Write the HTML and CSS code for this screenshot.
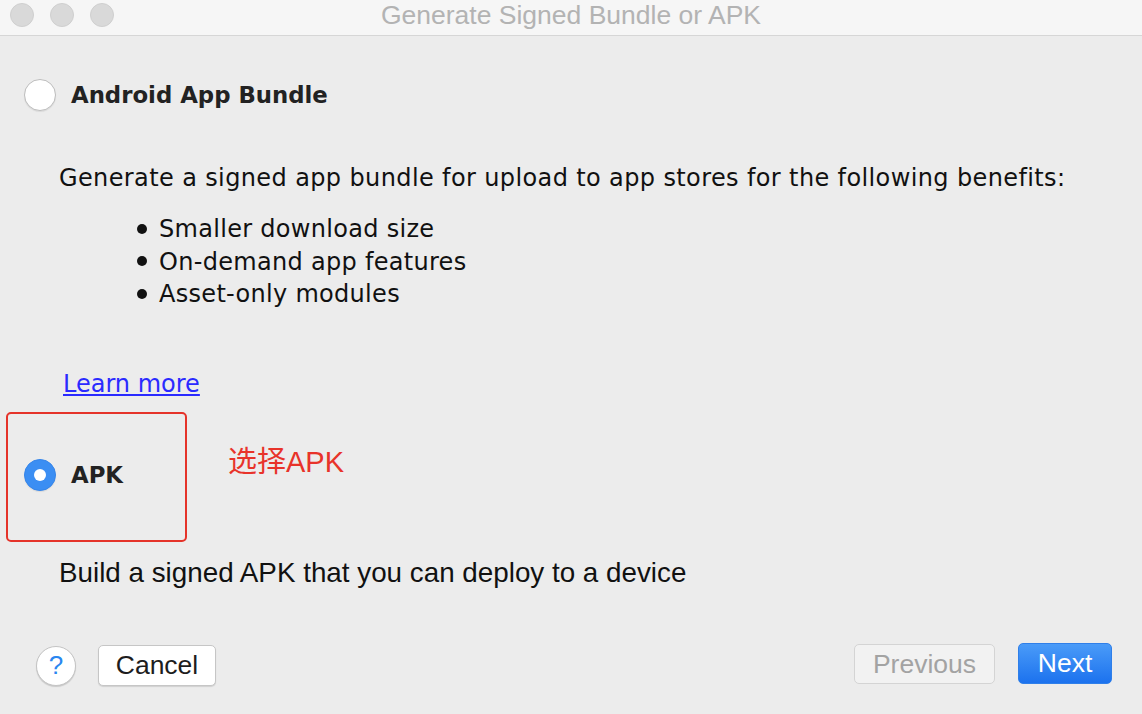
FILE: index.html
```html
<!DOCTYPE html>
<html>
<head>
<meta charset="utf-8">
<link rel="stylesheet" href="styles.css">
</head>
<body>
<div class="window">
  <div class="titlebar">
    <div class="lights"><span class="light"></span><span class="light"></span><span class="light"></span></div>
    <div class="title">Generate Signed Bundle or APK</div>
  </div>
  <div class="content">
    <div class="option opt-bundle">
      <span class="radio"></span>
      <span class="opt-label">Android App Bundle</span>
    </div>
    <p class="desc">Generate a signed app bundle for upload to app stores for the following benefits:</p>
    <ul class="benefits">
      <li>Smaller download size</li>
      <li>On-demand app features</li>
      <li>Asset-only modules</li>
    </ul>
    <a class="learn" href="#">Learn more</a>
    <div class="apk-row">
      <div class="highlight">
        <div class="option">
          <span class="radio checked"><span class="dot"></span></span>
          <span class="opt-label">APK</span>
        </div>
      </div>
      <div class="note">选择APK</div>
    </div>
    <p class="desc2">Build a signed APK that you can deploy to a device</p>
  </div>
  <div class="footer">
    <div class="left">
      <button class="help">?</button>
      <button class="btn cancel">Cancel</button>
    </div>
    <div class="right">
      <button class="btn prev">Previous</button>
      <button class="btn next">Next</button>
    </div>
  </div>
</div>
</body>
</html>
```
FILE: styles.css
```css
* { box-sizing: border-box; }
html, body { margin: 0; padding: 0; }
body {
  width: 1142px;
  height: 714px;
  overflow: hidden;
  background: #ececec;
  font-family: "Liberation Sans", Arial, sans-serif;
  color: #1a1a1a;
}
.window { display: flex; flex-direction: column; height: 714px; }
.titlebar {
  height: 36px;
  background: #f6f6f6;
  border-bottom: 1px solid #d6d6d6;
  position: relative;
  display: flex;
  align-items: center;
  justify-content: center;
}
.lights {
  position: absolute;
  left: 10px;
  top: 3px;
  display: flex;
  gap: 16px;
}
.light {
  width: 24px; height: 24px; border-radius: 50%;
  background: #d9d9d9;
  border: 1px solid #cfcfcf;
}
.title {
  font-size: 26.5px;
  color: #b3b3b3;
  margin-top: -4px;
}
.content {
  padding: 0 0 0 24px;
  display: flex;
  flex-direction: column;
}
.option {
  display: flex;
  align-items: center;
  gap: 15px;
}
.opt-bundle { margin-top: 43px; }
.radio {
  width: 32px; height: 32px; border-radius: 50%;
  background: #fff;
  border: 1px solid #bdbdbd;
  box-shadow: 0 1px 1px rgba(0,0,0,0.08);
  display: flex; align-items: center; justify-content: center;
}
.radio.checked { background: #3b8ef3; border-color: #3585ea; }
.dot { width: 12px; height: 12px; border-radius: 50%; background: #fff; }
.opt-label {
  font-family: "DejaVu Sans", Verdana, sans-serif;
  font-weight: bold;
  font-size: 22.8px;
  color: #222;
}
.desc {
  margin: 51px 0 0 35px;
  font-family: "DejaVu Sans", Verdana, sans-serif;
  font-size: 24px;
  letter-spacing: 0.38px;
  line-height: 32px;
  color: #111;
}
.benefits {
  list-style: none;
  margin: 19px 0 0 0;
  padding-left: 113px;
  font-family: "DejaVu Sans", Verdana, sans-serif;
  font-size: 24px;
  letter-spacing: 0.3px;
  line-height: 32.5px;
  color: #111;
}
.benefits li::before {
  content: "";
  display: inline-block;
  width: 10px; height: 10px;
  border-radius: 50%;
  background: #111;
  margin: 0 12px 3px 0;
  vertical-align: middle;
}
.learn {
  margin: 57px 0 0 39px;
  font-family: "DejaVu Sans", Verdana, sans-serif;
  font-size: 24px;
  color: #2a2aff;
  text-decoration: underline;
  align-self: flex-start;
  line-height: 32px;
}
.apk-row {
  display: flex;
  align-items: flex-start;
  margin-top: 12px;
  margin-left: -18px;
}
.highlight {
  width: 181px;
  height: 130px;
  border: 2px solid #e5332a;
  border-radius: 5px;
  padding: 45px 0 0 16px;
}
.note {
  color: #e8332a;
  font-size: 29px;
  margin: 26px 0 0 41px;
  font-family: "Liberation Sans", "Noto Sans CJK SC", sans-serif;
}
.desc2 {
  margin: 14px 0 0 35px;
  font-size: 27.8px;
  line-height: 34px;
  color: #111;
}
.footer {
  margin-top: auto;
  height: 93px;
  display: flex;
  justify-content: space-between;
  align-items: flex-start;
  padding: 24px 30px 0 36px;
}
.left, .right { display: flex; align-items: center; }
.left { gap: 22px; }
.right { gap: 23px; }
button { font-family: inherit; }
.help {
  width: 40px; height: 40px; border-radius: 50%;
  background: #fff;
  border: 1px solid #c4c4c4;
  box-shadow: 0 1px 1px rgba(0,0,0,0.15);
  color: #2a86f0;
  font-size: 26px;
  padding: 0;
}
.btn {
  height: 41px;
  font-size: 26.5px;
  border-radius: 5px;
  padding: 0;
}
.cancel {
  background: #fff;
  border: 1px solid #c6c6c6;
  box-shadow: 0 1px 1px rgba(0,0,0,0.12);
  color: #1d1d1d;
  width: 118px;
}
.prev {
  background: #f2f2f2;
  border: 1px solid #d4d4d4;
  color: #a3a3a3;
  width: 141px;
  height: 40px;
  margin-top: -1px;
}
.next {
  background: linear-gradient(#4a9bf8, #1c72ee);
  border: 1px solid #2f7fe9;
  color: #fff;
  width: 94px;
  margin-top: -2px;
}
```
